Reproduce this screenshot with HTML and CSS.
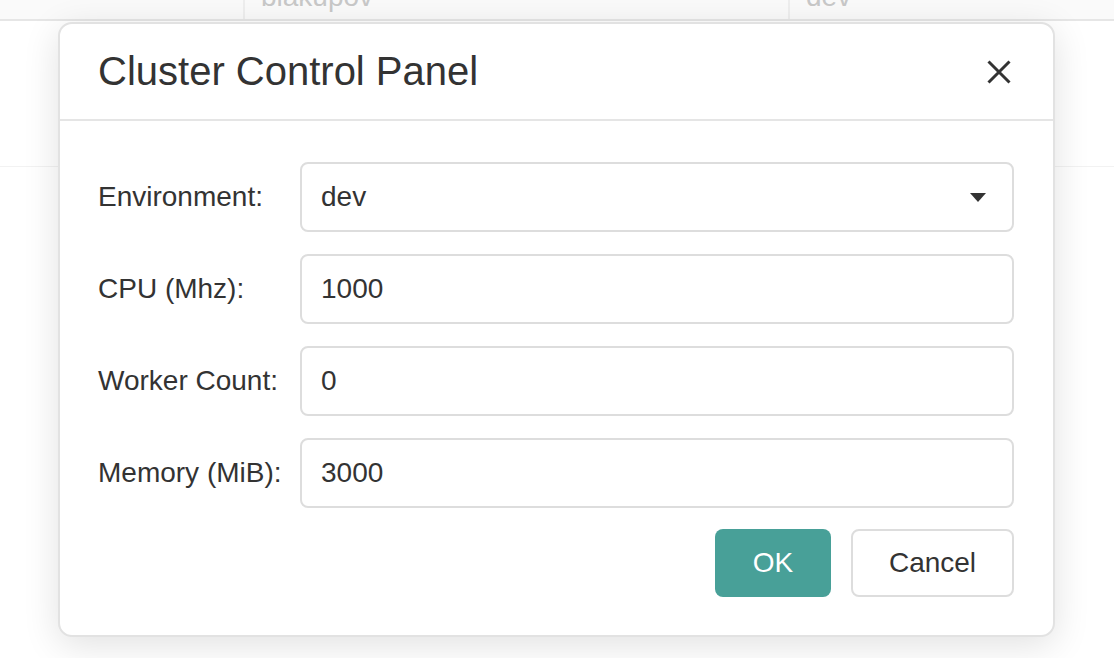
FILE: index.html
```html
<!DOCTYPE html>
<html lang="en">
<head>
    <meta charset="UTF-8">
    <meta name="viewport" content="width=device-width, initial-scale=1.0">
    <title>Cluster Control Panel</title>
    <link rel="stylesheet" href="styles.css">
</head>
<body>
    <!-- table behind the dialog -->
    <div class="page">
        <div class="table-row row-head">
            <div class="cell cell-first"></div>
            <div class="cell cell-owner">blakupov</div>
            <div class="cell cell-env">dev</div>
        </div>
        <div class="table-row row-body"></div>
    </div>

    <div class="modal">
        <div class="modal-header">
            <h1 class="modal-title">Cluster Control Panel</h1>
            <button class="close-btn" aria-label="Close">
                <svg width="24" height="24" viewBox="0 0 24 24">
                    <path d="M1.5 1.5 L22.5 22.5 M22.5 1.5 L1.5 22.5" stroke="#333" stroke-width="3" fill="none"/>
                </svg>
            </button>
        </div>

        <div class="modal-body">
            <div class="form-grid">
                <label for="env">Environment:</label>
                <div class="select-box" id="env">
                    <span>dev</span>
                    <span class="caret"></span>
                </div>

                <label for="cpu">CPU (Mhz):</label>
                <input type="text" id="cpu" class="field" value="1000">

                <label for="workers">Worker Count:</label>
                <input type="text" id="workers" class="field" value="0">

                <label for="memory">Memory (MiB):</label>
                <input type="text" id="memory" class="field" value="3000">
            </div>

            <div class="modal-footer">
                <button class="btn btn-ok">OK</button>
                <button class="btn btn-cancel">Cancel</button>
            </div>
        </div>
    </div>
</body>
</html>
```

FILE: styles.css
```css
body {
    margin: 0;
    padding: 0;
    background-color: #fff;
    font-family: "Liberation Sans", Arial, sans-serif;
    color: #333;
    overflow: hidden;
}
.page {
    width: 100%;
}
.table-row {
    display: flex;
}
.row-head {
    margin-top: -45px;
    height: 64px;
    border-bottom: 2px solid #e6e6e6;
    background-color: #fafafa;
}
.row-body {
    height: 145px;
    border-bottom: 1px solid #f2f2f2;
}
.cell {
    padding: 28px 0 0 16px;
    font-size: 28px;
    line-height: 28px;
    color: #c8c8c8;
}
.cell-first {
    width: 227px;
    border-right: 2px solid #eee;
}
.cell-owner {
    width: 527px;
    border-right: 2px solid #eee;
}
.cell-env {
    flex: 1;
}

.modal {
    position: absolute;
    top: 22px;
    left: 58px;
    width: 997px;
    box-sizing: border-box;
    background-color: #fff;
    border: 2px solid #e2e2e2;
    border-radius: 14px;
    box-shadow: 0 8px 36px rgba(0, 0, 0, 0.12);
}
.modal-header {
    height: 95px;
    display: flex;
    align-items: center;
    justify-content: space-between;
    padding: 0 42px 0 38px;
    border-bottom: 2px solid #e5e5e5;
}
.modal-title {
    margin: 0;
    font-size: 40px;
    font-weight: normal;
    color: #333;
}
.close-btn {
    background: none;
    border: none;
    padding: 0;
    width: 24px;
    height: 24px;
    cursor: pointer;
    display: flex;
}
.modal-body {
    padding: 41px 39px 38px 38px;
}
.form-grid {
    display: grid;
    grid-template-columns: 202px 1fr;
    row-gap: 22px;
    align-items: center;
}
label {
    font-size: 28px;
    color: #333;
}
.field,
.select-box {
    height: 70px;
    box-sizing: border-box;
    width: 100%;
    padding: 0 19px;
    border: 2px solid #ddd;
    border-radius: 8px;
    font-family: inherit;
    font-size: 28px;
    color: #333;
    background-color: #fff;
}
.select-box {
    display: flex;
    align-items: center;
    justify-content: space-between;
    padding-right: 26px;
}
.caret {
    width: 0;
    height: 0;
    border-left: 8px solid transparent;
    border-right: 8px solid transparent;
    border-top: 9px solid #333;
}
.modal-footer {
    display: flex;
    justify-content: flex-end;
    gap: 20px;
    margin-top: 21px;
}
.btn {
    height: 68px;
    box-sizing: border-box;
    border-radius: 8px;
    font-family: inherit;
    font-size: 28px;
    cursor: pointer;
}
.btn-ok {
    width: 116px;
    background-color: #48a098;
    border: none;
    color: white;
}
.btn-cancel {
    width: 163px;
    background-color: #fff;
    border: 2px solid #ddd;
    color: #333;
}
```
